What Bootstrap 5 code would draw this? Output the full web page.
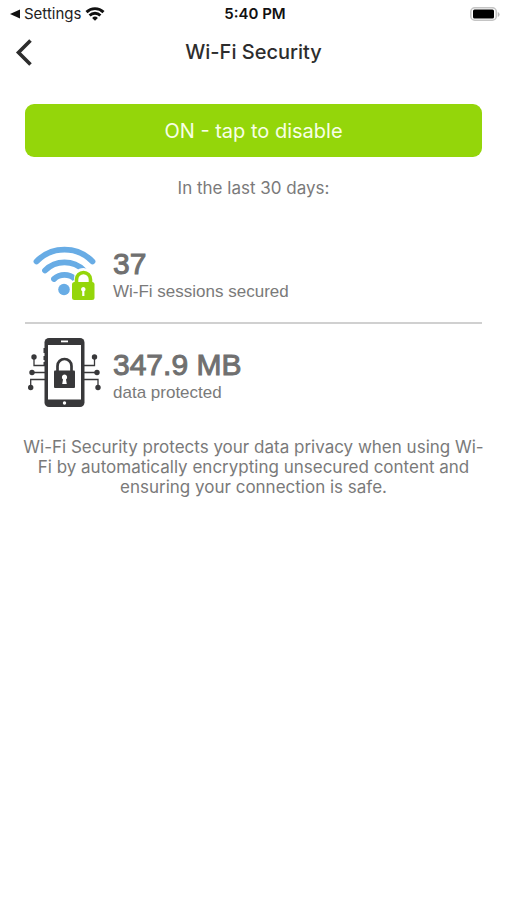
<!DOCTYPE html>
<html lang="en">
<head>
<meta charset="utf-8">
<meta name="viewport" content="width=device-width, initial-scale=1">
<title>Wi-Fi Security</title>
<link href="https://cdn.jsdelivr.net/npm/bootstrap@5.3.0/dist/css/bootstrap.min.css" rel="stylesheet">
<style>
  body { font-family: Inter, "Liberation Sans", sans-serif; color: #7a7a7a; background: #fff; }
  .status-bar { display: grid; grid-template-columns: 1fr auto 1fr; height: 28px; padding: 0 7px 0 10px; font-size: 15px; line-height: 20px; color: #111; }
  .status-bar a { color: #222; }
  .clock { font-weight: 600; }
  .title-bar { display: grid; grid-template-columns: 1fr auto 1fr; height: 48px; padding: 0 15px; color: #2d2d2d; }
  .title-bar h1 { font-size: 20px; line-height: 24px; font-weight: 500; }
  .content { padding: 28px 25px; }
  .btn-toggle { --bs-btn-color: #f8ffe6; --bs-btn-bg: #94d60a; --bs-btn-hover-bg: #86c409; --bs-btn-hover-color: #fff; --bs-btn-active-bg: #79b108; --bs-btn-active-color: #fff; --bs-btn-border-radius: 9px; --bs-btn-font-size: 20px; height: 53px; border: 0; }
  .period { font-size: 17px; line-height: 20px; margin: 21px 0 24px; }
  .stat { font-family: "Liberation Sans", Arial, sans-serif; height: 100px; }
  .stat + .stat { border-top: 2px solid #d0d0d0; }
  .stat svg { margin: 0 12px 4px 3px; }
  .stat-text { padding-top: 8px; }
  .stat-value { font-size: 30px; line-height: 32px; color: #707070; -webkit-text-stroke: 1px #707070; }
  .stat-label { font-size: 17px; line-height: 24px; }
  .about { font-size: 17px; line-height: 20px; margin: 15px -5px 0; }
</style>
</head>
<body>
<header>
  <div class="status-bar align-items-center">
    <div class="d-flex align-items-center gap-1">
      <a href="#" class="d-flex align-items-center gap-1 text-decoration-none"><svg width="10" height="10" viewBox="0 0 10 10" aria-hidden="true"><path d="M0 5 10 .5v9z" fill="#111"/></svg>Settings</a>
      <svg width="20" height="14" viewBox="0 0 20 14" role="img" aria-label="Wi-Fi" fill="none" stroke="#111" stroke-width="2.900"><path d="M1.500 5.100a12.200 12.200 0 0 1 17 0M4.600 8.500a7.700 7.700 0 0 1 10.800 0"/><path d="M10 13.800 7.100 10.900a4.200 4.200 0 0 1 5.800 0z" fill="#111" stroke="none"/></svg>
    </div>
    <div class="clock">5:40 PM</div>
    <svg class="ms-auto" width="30" height="15" viewBox="0 0 30 15" role="img" aria-label="Battery full"><rect x=".8" y=".8" width="25.500" height="12.400" rx="4" fill="#fff" stroke="#c4c4c4" stroke-width="1.600"/><rect x="3" y="2.500" width="21" height="9" rx="1.500" fill="#000"/><path d="M27.800 5v5q1.800-.8 1.800-2.500T27.800 5z" fill="#bbb"/></svg>
  </div>
  <nav class="title-bar align-items-center" aria-label="Screen">
    <button type="button" class="btn p-0 border-0 d-flex me-auto" aria-label="Back"><svg width="18" height="28" viewBox="0 0 18 28" fill="none" stroke="#2d2d2d" stroke-width="3.600"><path d="M15.500 2.500 3.500 14.500l12 12"/></svg></button>
    <h1 class="m-0">Wi-Fi Security</h1>
  </nav>
</header>
<main class="content">
  <button type="button" class="btn btn-toggle w-100">ON - tap to disable</button>
  <p class="period text-center">In the last 30 days:</p>
  <section class="stat d-flex align-items-center">
    <svg width="73" height="72" viewBox="0 -2 73 72" aria-hidden="true">
      <g fill="none" stroke="#68ace5" stroke-width="5.800" stroke-linecap="round"><path d="M8.500 25.500a39 39 0 0 1 56 0M17 34.500a27.500 27.500 0 0 1 39 0M26 43a15.500 15.500 0 0 1 21 0"/></g>
      <circle cx="36" cy="53.500" r="5.800" fill="#68ace5"/>
      <path d="M43 66V46l3-2q0-12 9.500-12T66 42l3 3v21z" fill="#fff"/>
      <rect x="44" y="46" width="22.500" height="18" rx="2.500" fill="#94d60a"/>
      <path d="M48.500 48v-4.500a7 7 0 0 1 14 0V48" fill="none" stroke="#94d60a" stroke-width="3.600"/>
      <path d="M55.300 51a2.300 2.300 0 0 0-1.100 4.300V60h2.200v-4.700A2.300 2.300 0 0 0 55.300 51z" fill="#fff"/>
    </svg>
    <div class="stat-text"><div class="stat-value">37</div><div class="stat-label">Wi-Fi sessions secured</div></div>
  </section>
  <section class="stat d-flex align-items-center">
    <svg width="73" height="72" viewBox="0 0 73 72" aria-hidden="true" fill="#38383a">
      <path d="M6 22v8.500h12M4 37.500h14M2.700 53v-8.500H18M66.500 22v8.500H54M68 37.500H54M70 53v-8.500H54" fill="none" stroke="#38383a" stroke-width="1.300"/>
      <circle cx="6" cy="22" r="2.700"/><circle cx="4" cy="37.500" r="2.700"/><circle cx="2.700" cy="52.500" r="2.700"/>
      <circle cx="66.500" cy="22" r="2.700"/><circle cx="69" cy="37.500" r="2.700"/><circle cx="70" cy="52.500" r="2.700"/>
      <path d="M15.500 13h2v5h-2zM15.500 21h2v4h-2zM15.500 27h2v4h-2z"/>
      <rect x="16.500" y="3" width="40" height="69" rx="4.500"/>
      <path d="M20 10h33v54.500H20z" fill="#fff"/>
      <path d="M33 5.500h7v1.800h-7z" fill="#fff"/><circle cx="36.500" cy="68" r="1.700" fill="#fff"/>
      <rect x="26" y="35.500" width="21" height="17.500" rx="1"/>
      <path d="M29.500 36v-5a7 7 0 0 1 14 0v5" fill="none" stroke="#38383a" stroke-width="2.700"/>
      <path d="M36.500 39.500a2.700 2.700 0 0 0-1.500 4.900l-.8 4.600h4.600l-.8-4.600a2.700 2.700 0 0 0-1.500-4.900z" fill="#fff"/>
    </svg>
    <div class="stat-text"><div class="stat-value">347.9 MB</div><div class="stat-label">data protected</div></div>
  </section>
  <p class="about text-center mb-0">Wi-Fi Security protects your data privacy when using Wi-Fi by automatically encrypting unsecured content and ensuring your connection is safe.</p>
</main>
<script src="https://cdn.jsdelivr.net/npm/bootstrap@5.3.0/dist/js/bootstrap.bundle.min.js"></script>
</body>
</html>
